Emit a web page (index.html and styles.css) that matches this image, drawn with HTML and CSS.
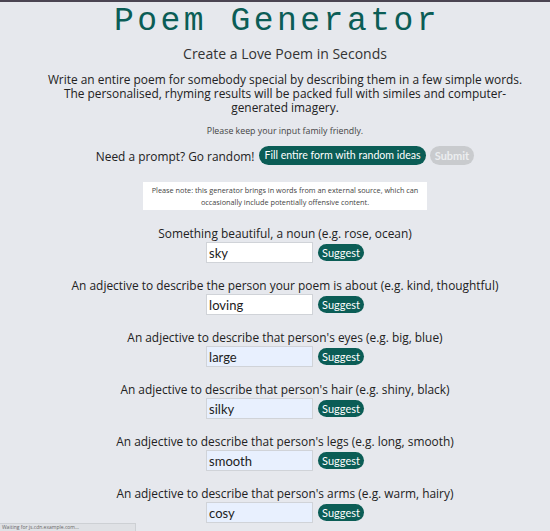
FILE: index.html
```html
<!DOCTYPE html>
<html>
<head>
<meta charset="utf-8">
<link rel="stylesheet" href="styles.css">
</head>
<body>
<div class="topline"></div>
<main class="page">
  <h1 class="title">Poem Generator</h1>
  <h2 class="subtitle">Create a Love Poem in Seconds</h2>
  <p class="intro">Write an entire poem for somebody special by describing them in a few simple words. The personalised, rhyming results will be packed full with similes and computer-generated imagery.</p>
  <p class="friendly">Please keep your input family friendly.</p>
  <div class="random-row">
    <span class="random-label">Need a prompt? Go random!</span>
    <button class="btn btn-fill">Fill entire form with random ideas</button>
    <button class="btn btn-submit">Submit</button>
  </div>
  <div class="notice">Please note: this generator brings in words from an external source, which can occasionally include potentially offensive content.</div>
  <div class="fields">
    <div class="field">
      <label class="field-label">Something beautiful, a noun (e.g. rose, ocean)</label>
      <div class="field-row"><input class="field-input" value="sky"><button class="btn btn-suggest">Suggest</button></div>
    </div>
    <div class="field">
      <label class="field-label">An adjective to describe the person your poem is about (e.g. kind, thoughtful)</label>
      <div class="field-row"><input class="field-input" value="loving"><button class="btn btn-suggest">Suggest</button></div>
    </div>
    <div class="field">
      <label class="field-label">An adjective to describe that person's eyes (e.g. big, blue)</label>
      <div class="field-row"><input class="field-input auto" value="large"><button class="btn btn-suggest">Suggest</button></div>
    </div>
    <div class="field">
      <label class="field-label">An adjective to describe that person's hair (e.g. shiny, black)</label>
      <div class="field-row"><input class="field-input auto" value="silky"><button class="btn btn-suggest">Suggest</button></div>
    </div>
    <div class="field">
      <label class="field-label">An adjective to describe that person's legs (e.g. long, smooth)</label>
      <div class="field-row"><input class="field-input auto" value="smooth"><button class="btn btn-suggest">Suggest</button></div>
    </div>
    <div class="field">
      <label class="field-label">An adjective to describe that person's arms (e.g. warm, hairy)</label>
      <div class="field-row"><input class="field-input auto" value="cosy"><button class="btn btn-suggest">Suggest</button></div>
    </div>
  </div>
</main>
<div class="status">Waiting for js.cdn.example.com…</div>
</body>
</html>
```
FILE: styles.css
```css
html, body {
  margin: 0;
  padding: 0;
  background: #e6e8ed;
  overflow: hidden;
  height: 531px;
}
body {
  font-family: "Open Sans", "Liberation Sans", sans-serif;
  color: #333;
  position: relative;
}
.topline {
  height: 2px;
  background: #4b4552;
}
.page {
  display: flex;
  flex-direction: column;
  align-items: center;
  text-align: center;
  padding-left: 20px;
}
.title {
  margin: 3px 0 0 -16px;
  font-family: "Liberation Mono", "DejaVu Sans Mono", monospace;
  font-weight: normal;
  font-size: 33px;
  line-height: 34px;
  letter-spacing: 3.5px;
  color: #0b5d56;
}
.subtitle {
  margin: 6px 0 0;
  font-weight: normal;
  font-size: 14px;
  line-height: 17px;
  color: #333;
}
.intro {
  margin: 10px 0 0;
  width: 480px;
  font-size: 11.9px;
  line-height: 14px;
  color: #222;
}
.friendly {
  margin: 11px 0 0;
  font-size: 8.8px;
  line-height: 12px;
  color: #444;
}
.random-row {
  margin-top: 9px;
  display: flex;
  align-items: center;
  gap: 4px;
}
.random-label {
  font-size: 11.9px;
  color: #222;
  margin-right: 1px;
}
.btn {
  border: none;
  border-radius: 10px;
  font-family: "Lato", "Open Sans", sans-serif;
  padding: 0 6px;
  cursor: pointer;
}
.btn-fill {
  background: #0b5d56;
  color: #fff;
  font-size: 10.6px;
  height: 19px;
  line-height: 19px;
  padding: 0 5px;
}
.btn-submit {
  background: #c9cbce;
  color: #eceef0;
  font-size: 11px;
  height: 19px;
  line-height: 19px;
  padding: 0 5px;
  font-weight: bold;
}
.notice {
  margin-top: 17px;
  width: 272px;
  padding: 2px 6px;
  background: #fff;
  font-size: 7.3px;
  line-height: 12px;
  color: #444;
}
.fields {
  margin-top: 15px;
  display: flex;
  flex-direction: column;
  align-items: center;
  gap: 14px;
}
.field {
  display: flex;
  flex-direction: column;
  align-items: center;
}
.field-label {
  font-size: 11.9px;
  line-height: 17px;
  color: #222;
}
.field-row {
  display: flex;
  align-items: center;
  gap: 5px;
}
.field-input {
  box-sizing: border-box;
  width: 107px;
  height: 21px;
  border: 1px solid #d0d3d8;
  background: #fff;
  font-family: "Lato", "Open Sans", sans-serif;
  font-size: 13px;
  color: #222;
  padding: 0 2px;
  margin: 0;
  outline: none;
}
.field-input.auto {
  background: #e8f0fe;
}
.btn-suggest {
  background: #0b5d56;
  color: #fff;
  font-size: 11px;
  height: 17px;
  line-height: 17px;
  padding: 0 4px;
  border-radius: 9px;
}
.status {
  position: absolute;
  left: 0;
  bottom: 0;
  width: 133px;
  height: 7px;
  background: #dfe1e5;
  border-top: 1px solid #cdd0d4;
  border-right: 1px solid #cdd0d4;
  font-size: 5px;
  line-height: 7px;
  color: #666;
  padding-left: 2px;
  overflow: hidden;
  white-space: nowrap;
}
```
